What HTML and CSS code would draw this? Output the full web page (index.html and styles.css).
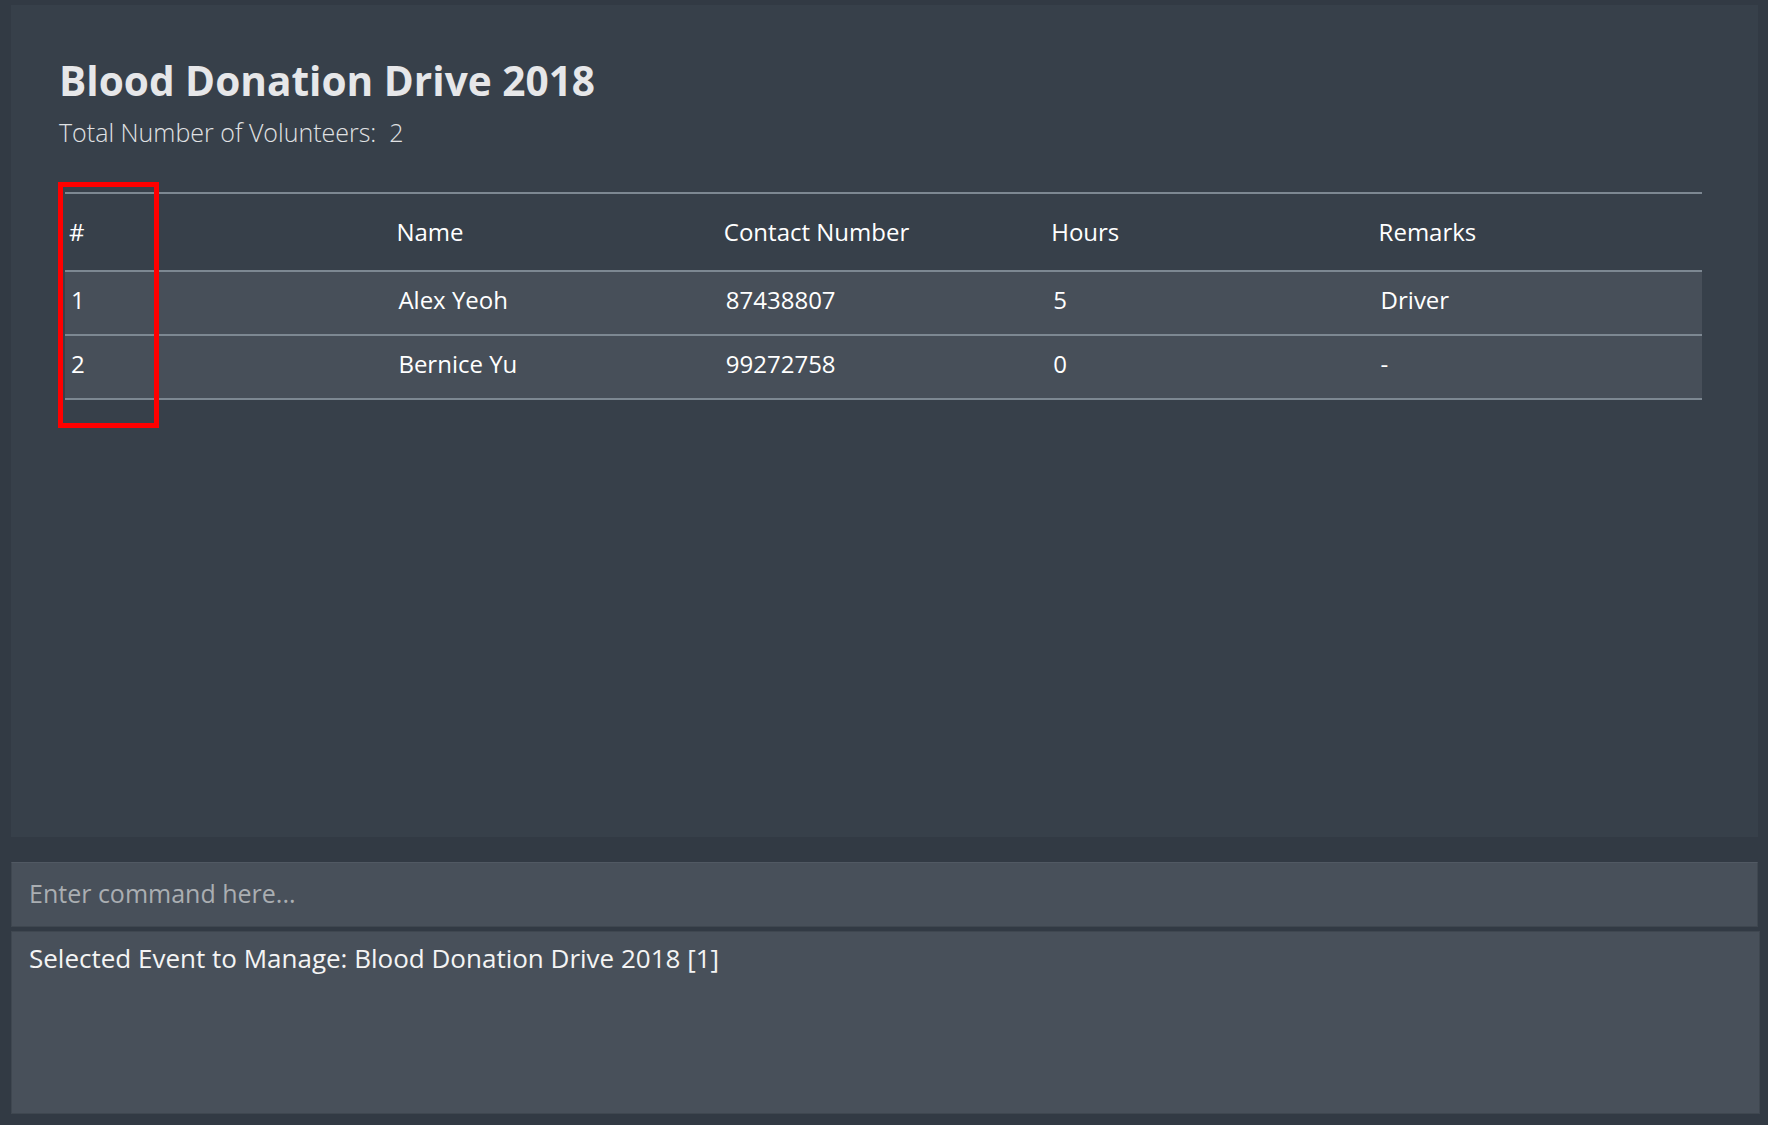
FILE: index.html
```html
<!DOCTYPE html>
<html lang="en">
<head>
<meta charset="utf-8">
<title>Blood Donation Drive 2018</title>
<link rel="stylesheet" href="styles.css">
</head>
<body>
<div class="app">
  <main class="panel">
    <h1 class="title">Blood Donation Drive 2018</h1>
    <p class="subtitle">Total Number of Volunteers:&nbsp; 2</p>
    <div class="table">
      <div class="thead">
        <div class="cell">#</div>
        <div class="cell">Name</div>
        <div class="cell">Contact Number</div>
        <div class="cell">Hours</div>
        <div class="cell">Remarks</div>
      </div>
      <div class="row">
        <div class="cell">1</div>
        <div class="cell">Alex Yeoh</div>
        <div class="cell">87438807</div>
        <div class="cell">5</div>
        <div class="cell">Driver</div>
      </div>
      <div class="row">
        <div class="cell">2</div>
        <div class="cell">Bernice Yu</div>
        <div class="cell">99272758</div>
        <div class="cell">0</div>
        <div class="cell">-</div>
      </div>
      <div class="highlight"></div>
    </div>
  </main>
  <div class="command">
    <input class="command-input" type="text" placeholder="Enter command here...">
  </div>
  <div class="result">Selected Event to Manage: Blood Donation Drive 2018 [1]</div>
</div>
</body>
</html>
```

FILE: styles.css
```css
* {
  box-sizing: border-box;
}

html, body {
  margin: 0;
  padding: 0;
  background: #323a44;
  font-family: "Open Sans", "Noto Sans", sans-serif;
}

.app {
  height: 1125px;
  display: flex;
  flex-direction: column;
  padding: 5px 10px 11px 11px;
}

.panel {
  height: 832px;
  flex: none;
  background: #37404a;
  padding: 52px 56px 0 48px;
}

.title {
  margin: 0;
  font-size: 40.6px;
  line-height: 48px;
  font-weight: 700;
  color: #e6e7e9;
}

.subtitle {
  margin: 11px 0 0 0;
  font-size: 25px;
  line-height: 32px;
  font-weight: 300;
  color: #e0e2e4;
}

.table {
  position: relative;
  margin: 44px 0 0 6px;
  color: #ffffff;
  font-size: 24px;
  line-height: 32px;
}

.thead,
.row {
  display: grid;
  grid-template-columns: repeat(5, 1fr);
}

.thead {
  border-top: 2px solid #7d8892;
  border-bottom: 2px solid #7d8892;
  padding: 22px 0 22px 0;
}

.thead .cell {
  padding-left: 4px;
}

.row {
  background: #474f59;
  border-bottom: 2px solid #7d8892;
  padding: 12px 0 18px 0;
}

.row .cell {
  padding-left: 6px;
}

.highlight {
  position: absolute;
  left: -7px;
  top: -10px;
  width: 101px;
  height: 246px;
  border: 5px solid #ff0000;
}

.command {
  margin-top: 25px;
  height: 65px;
  flex: none;
  background: #48505a;
  border: 1px solid #3f4750;
  border-top-color: #515963;
  padding: 14px 17px 17px 17px;
}

.command-input {
  display: block;
  width: 100%;
  margin: 0;
  padding: 0;
  border: none;
  outline: none;
  background: transparent;
  font-family: "Open Sans", "Noto Sans", sans-serif;
  font-size: 25px;
  line-height: 32px;
  height: 32px;
  color: #ffffff;
}

.command-input::placeholder {
  color: #aaaeb2;
  opacity: 1;
}

.result {
  margin-top: 4px;
  margin-right: -2px;
  height: 183px;
  flex: none;
  background: #48505a;
  border: 1px solid #3f4750;
  padding: 10px 17px;
  font-size: 26px;
  line-height: 32px;
  color: #f4f4f4;
}
```
